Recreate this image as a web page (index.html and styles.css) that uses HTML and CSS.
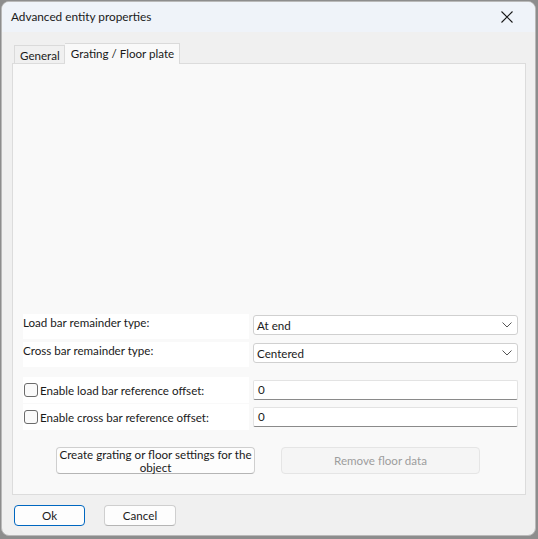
FILE: index.html
```html
<!DOCTYPE html>
<html lang="en">
  <head>
    <meta charset="UTF-8" />
    <meta name="viewport" content="width=device-width, initial-scale=1.0" />
    <title>Advanced entity properties</title>
    <link rel="stylesheet" href="styles.css">
  </head>
  <body>
    <div class="dialog">
      <div class="titlebar">
        <span class="title">Advanced entity properties</span>
        <svg class="close" width="12" height="12" viewBox="0 0 12 12">
          <path d="M0.5 0.5 L11.5 11.5 M11.5 0.5 L0.5 11.5" stroke="#1a1a1a" stroke-width="1.1" fill="none" />
        </svg>
      </div>

      <div class="content">
        <div class="tabs">
          <div class="tab">General</div>
          <div class="tab active">Grating / Floor plate</div>
        </div>

        <div class="panel">
          <div class="spacer"></div>

          <div class="row">
            <div class="label">Load bar remainder type:</div>
            <div class="combo">
              <span>At end</span>
              <svg width="10" height="6" viewBox="0 0 10 6"><path d="M0.5 0.5 L5 5 L9.5 0.5" stroke="#555" fill="none" /></svg>
            </div>
          </div>
          <div class="row">
            <div class="label">Cross bar remainder type:</div>
            <div class="combo">
              <span>Centered</span>
              <svg width="10" height="6" viewBox="0 0 10 6"><path d="M0.5 0.5 L5 5 L9.5 0.5" stroke="#555" fill="none" /></svg>
            </div>
          </div>

          <div class="row check-row first">
            <label class="label check"><span class="box"></span>Enable load bar reference offset:</label>
            <div class="input">0</div>
          </div>
          <div class="row check-row">
            <label class="label check"><span class="box"></span>Enable cross bar reference offset:</label>
            <div class="input">0</div>
          </div>

          <div class="actions">
            <button class="btn wide">Create grating or floor settings for the<br>object</button>
            <button class="btn wide" disabled>Remove floor data</button>
          </div>
        </div>

        <div class="footer">
          <button class="btn small default">Ok</button>
          <button class="btn small">Cancel</button>
        </div>
      </div>
    </div>
  </body>
</html>
```

FILE: styles.css
```css
body {
  margin: 0;
  background: #8d8d8d;
  font-family: Lato, "Noto Sans", sans-serif;
  font-size: 11.6px;
  color: #1a1a1a;
}
.dialog {
  margin: 1px 0 0 1px;
  width: 535px;
  height: 535px;
  background: #f0f0f0;
  border: 1px solid #b9b9b9;
  border-radius: 8px;
  overflow: hidden;
  box-sizing: border-box;
}
.titlebar {
  height: 30px;
  background: #eff3f9;
  display: flex;
  align-items: center;
  justify-content: space-between;
  padding: 0 22px 0 9px;
}
.title {
  font-size: 11.8px;
  margin-top: -2px;
}
.close {
  margin-top: -1px;
}
.content {
  padding: 10px 9px 0 10px;
}
.tabs {
  display: flex;
  align-items: flex-end;
  height: 21px;
  padding-left: 2px;
}
.tab {
  height: 18px;
  padding: 0 4px 0 5px;
  border: 1px solid #dadada;
  border-bottom: none;
  line-height: 19px;
  box-sizing: border-box;
}
.tab.active {
  height: 21px;
  padding: 0 5px 0 6px;
  background: #f9f9f9;
  border-left: none;
  line-height: 19px;
  margin-bottom: -1px;
  position: relative;
}
.panel {
  height: 432px;
  background: #f9f9f9;
  border: 1px solid #dcdcdc;
  box-sizing: border-box;
  display: flex;
  flex-direction: column;
  padding: 0 7px 20px 10px;
}
.spacer {
  flex: 1;
}
.row {
  display: flex;
  gap: 4px;
  height: 25px;
  margin-bottom: 3px;
}
.row.first {
  margin-top: 7px;
}
.row.check-row {
  height: 26px;
  margin-bottom: 1px;
}
.label {
  width: 226px;
  background: #ffffff;
  padding: 2px 0 0 0;
  box-sizing: border-box;
}
.check {
  display: flex;
  align-items: center;
  padding: 0 0 0 1px;
}
.box {
  width: 12px;
  height: 12px;
  border: 1px solid #6b6b6b;
  border-radius: 3px;
  margin-right: 2px;
  background: #fafafa;
}
.combo {
  flex: 1;
  height: 20px;
  margin-top: 1px;
  background: #ffffff;
  border: 1px solid #d0d0d0;
  border-radius: 3px;
  display: flex;
  align-items: center;
  justify-content: space-between;
  padding: 0 5px 0 3px;
  box-sizing: border-box;
}
.input {
  flex: 1;
  height: 20px;
  margin-top: 3px;
  background: #ffffff;
  border: 1px solid #e3e3e3;
  border-bottom-color: #8a8a8a;
  border-radius: 2px;
  padding: 0 4px;
  line-height: 18px;
  box-sizing: border-box;
}
.actions {
  display: flex;
  gap: 26px;
  margin: 16px 0 0 33px;
}
.btn {
  font-family: inherit;
  font-size: 11.6px;
  color: #1a1a1a;
  background: #fdfdfd;
  border: 1px solid #cfcfcf;
  border-bottom-color: #b5b5b5;
  border-radius: 4px;
  padding: 0;
  line-height: 13px;
}
.btn.wide {
  width: 199px;
  height: 27px;
  white-space: nowrap;
}
.btn:disabled {
  background: #f5f5f5;
  border-color: #e5e5e5;
  color: #9d9d9d;
}
.footer {
  display: flex;
  gap: 19px;
  padding: 10px 0 0 2px;
}
.btn.small {
  width: 72px;
  height: 21px;
}
.btn.default {
  border: 1px solid #0067c0;
  width: 71px;
}
```
